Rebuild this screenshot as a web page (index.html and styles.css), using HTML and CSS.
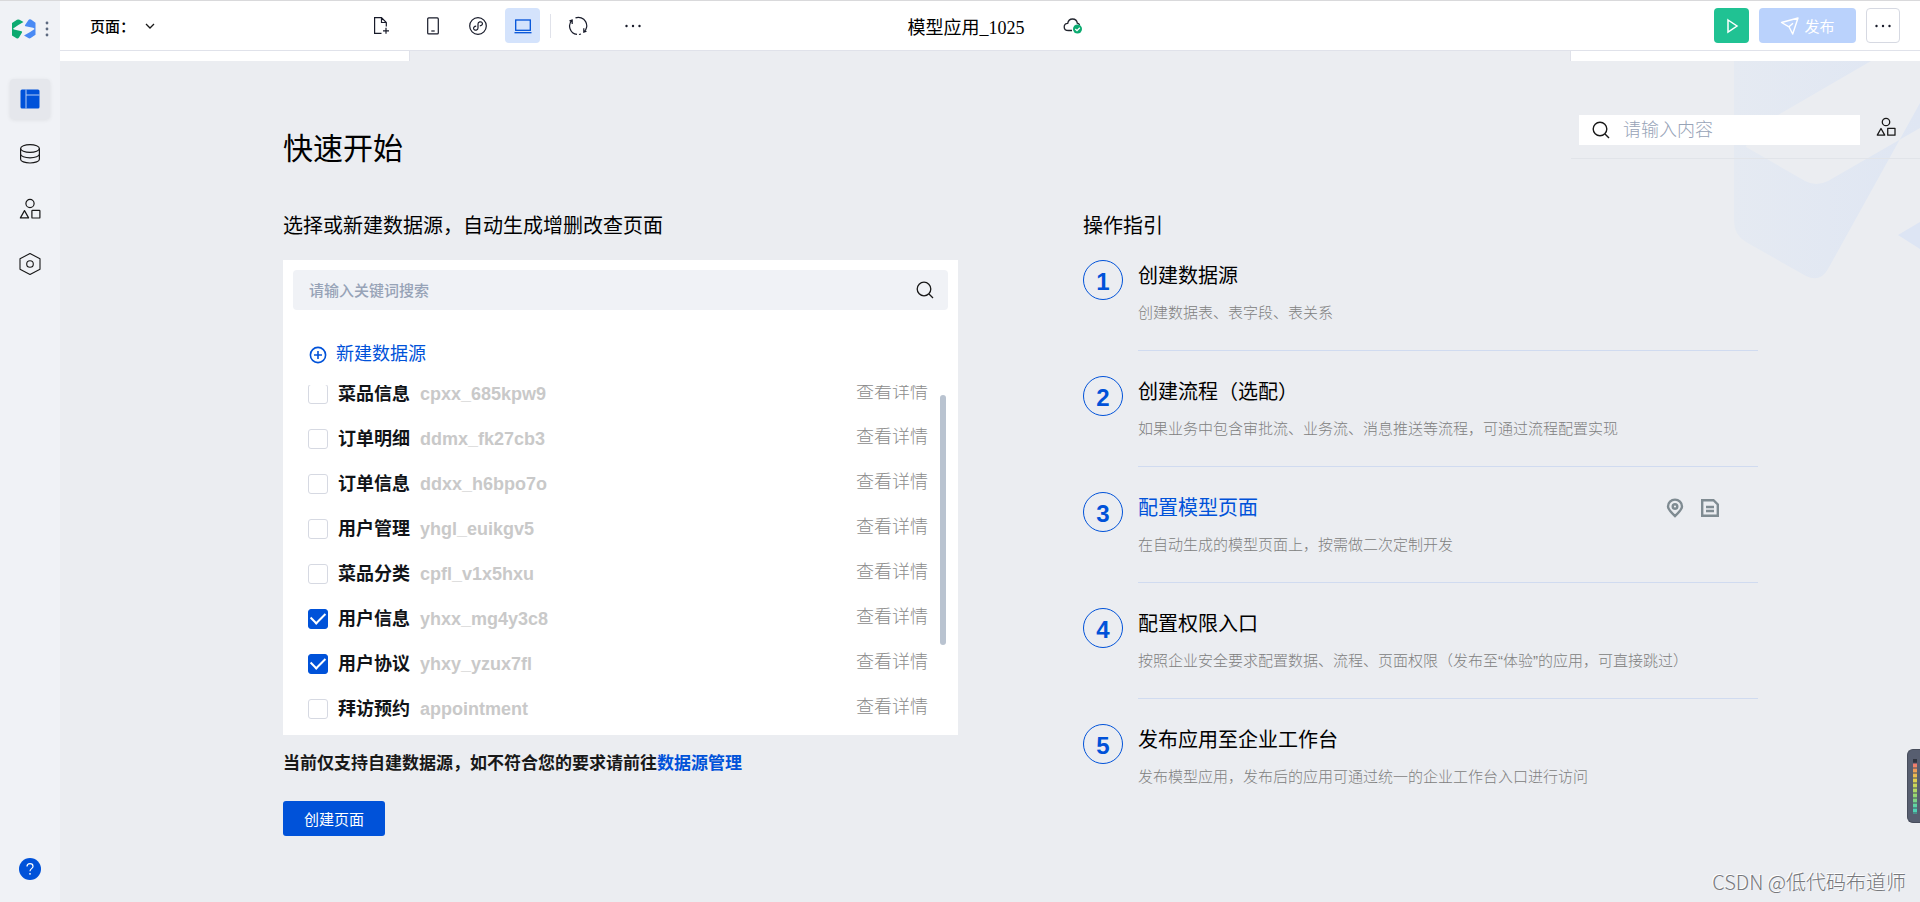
FILE: index.html
```html
<!DOCTYPE html>
<html lang="zh-CN">
<head>
<meta charset="utf-8">
<title>模型应用_1025</title>
<link rel="stylesheet" href="styles.css">
</head>
<body>
<div class="app">
  <aside class="sidebar">
    <div class="brand">
      <svg class="logo" width="24" height="20" viewBox="0 0 24 20">
        <path fill="#0caa70" d="M0 4 5 .8Q6.200 0 7.500 .8L11.500 3Q5 6.500 1.200 9.500Q.8 10.200 2 10.500L9.500 12.300Q10.500 12.600 10 13.500L7 18.500Q6 20 4.500 19.200L0 16.500Z"/>
        <path fill="#4a8af4" d="M23.500 15.800 18.700 19Q17.500 19.800 16.300 19L12 16.500Q18.500 13 22.300 10.200Q22.800 9.300 21 8.800L13.500 7.200Q12.600 7 13.100 6.100L16.500 1Q17.500 -.4 19 .5L23.500 3.800Z"/>
      </svg>
      <button class="plain" aria-label="菜单">
        <svg width="4" height="18" viewBox="0 0 4 18" fill="#5d6a80"><circle cx="2" cy="3" r="1.400"/><circle cx="2" cy="9" r="1.400"/><circle cx="2" cy="15" r="1.400"/></svg>
      </button>
    </div>
    <nav class="side-nav">
      <button class="side-btn side-btn-active" aria-label="页面">
        <svg width="20" height="20" viewBox="0 0 20 20"><rect x=".5" y=".5" width="19" height="19" rx="1.500" fill="#0052d9"/><path d="M6 .5V19.500M6 6H19.500" stroke="#b5cdf5" fill="none"/></svg>
      </button>
      <button class="side-btn" aria-label="数据源">
        <svg width="22" height="22" viewBox="0 0 22 22" fill="none" stroke="#181818" stroke-width="1.200"><ellipse cx="11" cy="5.500" rx="9.400" ry="3.900"/><path d="M1.600 5.500V16.200C1.600 18.400 5.800 20 11 20S20.400 18.400 20.400 16.200V5.500M1.600 11C1.600 13.200 5.800 14.800 11 14.800S20.400 13.200 20.400 11"/></svg>
      </button>
      <button class="side-btn" aria-label="组件">
        <svg width="22" height="22" viewBox="0 0 22 22" fill="none" stroke="#181818" stroke-width="1.200" stroke-linejoin="round"><circle cx="11" cy="5.500" r="4.100"/><path d="M5.500 12.600 9.600 19.900H1.400Z"/><rect x="12.900" y="12.400" width="8" height="7.600" rx=".6"/></svg>
      </button>
      <button class="side-btn" aria-label="设置">
        <svg width="22" height="24" viewBox="0 0 22 24" fill="none" stroke="#181818" stroke-width="1.100" stroke-linejoin="round"><path d="M11 1.500 21 6.800V17.200L11 22.500 1 17.200V6.800Z"/><circle cx="11" cy="12" r="3.300"/></svg>
      </button>
    </nav>
    <button class="plain help" aria-label="帮助">
      <svg width="24" height="24" viewBox="0 0 24 24" fill="none"><circle cx="12" cy="12" r="11" fill="#0052d9"/><path d="M9 9.600C9 7.700 10.300 6.700 12 6.700S15 7.700 15 9.400C15 11.600 12 11.700 12 14.200" stroke="#fff" stroke-width="1.200"/><circle cx="12" cy="16.800" r=".9" fill="#fff"/></svg>
    </button>
  </aside>

  <div class="workspace">
    <header class="topbar">
      <div class="tools">
        <button class="plain page-picker">页面：
          <svg width="12" height="8" viewBox="0 0 12 8" fill="none" stroke="#181818" stroke-width="1.300"><path d="M2 2 6 6 10 2"/></svg>
        </button>
        <button class="tool tool-new" aria-label="新建页面">
          <svg width="20" height="20" viewBox="0 0 20 20" fill="none" stroke="#181b2a" stroke-width="1.200"><path d="M9.500 17.300H2.600V1.700H9.500L14.300 6.500V10.500M9.500 1.700V6.500H14.300M11 14.800H17M14 11.800V17.800"/></svg>
        </button>
        <button class="tool" aria-label="手机">
          <svg width="20" height="20" viewBox="0 0 20 20" fill="none" stroke="#181b2a" stroke-width="1.200"><rect x="4.700" y="1.900" width="10.600" height="16" rx="1"/><path d="M8.300 15H11.700"/></svg>
        </button>
        <button class="tool" aria-label="小程序">
          <svg width="20" height="20" viewBox="0 0 20 20" fill="none" stroke="#181b2a" stroke-width="1.200"><circle cx="10" cy="10" r="8.300"/><path d="M11.800 9.800C14 9.600 14.600 8.300 14.400 7.300 14.100 6.100 12.800 5.600 11.700 5.900 10.600 6.200 10 7 10 8V12C10 13 9.400 13.800 8.300 14.100 7.200 14.400 5.900 13.900 5.600 12.700 5.400 11.700 6 10.400 8.200 10.200"/></svg>
        </button>
        <button class="tool tool-active" aria-label="电脑">
          <svg width="20" height="20" viewBox="0 0 20 20" fill="none" stroke="#0052d9" stroke-width="1.300"><rect x="2.700" y="4" width="14.600" height="10.300"/><path d="M1.500 16.700H18.500"/></svg>
        </button>
        <span class="separator"></span>
        <button class="tool" aria-label="刷新">
          <svg width="20" height="20" viewBox="0 0 20 20" fill="none" stroke="#181b2a" stroke-width="1.200"><path d="M9 18.400A8.400 8.400 0 0 1 4.200 4M4.200 8V4L1.500 4.800M7.500 1.900A8.400 8.400 0 0 1 15.800 16.200M15.800 12.200V16.200L18.500 15.200M11 18.500 13 18"/></svg>
        </button>
        <button class="tool tool-more" aria-label="更多">
          <svg width="20" height="20" viewBox="0 0 20 20" fill="#181b2a"><circle cx="3.500" cy="10" r="1.200"/><circle cx="10" cy="10" r="1.200"/><circle cx="16.500" cy="10" r="1.200"/></svg>
        </button>
      </div>
      <div class="app-name">模型应用_1025
        <svg width="20" height="18" viewBox="0 0 20 18" fill="none"><path d="M5.500 13.500C3 13.500 1.200 12 1.200 9.900 1.200 8 2.700 6.500 4.700 6.400 5.200 3.600 7 2 9.500 2 12.200 2 14 3.800 14.300 6.200 15.500 6.500 16.300 7.200 16.600 8M5.500 13.500H9" stroke="#22252e" stroke-width="1.300"/><circle cx="14.500" cy="12" r="4.500" fill="#0cab70"/><path d="M12.300 12 14 13.600 16.800 10.700" stroke="#fff" stroke-width="1.300"/></svg>
      </div>
      <div class="actions">
        <button class="run" aria-label="预览">
          <svg width="16" height="16" viewBox="0 0 16 16" fill="none" stroke="#fff" stroke-width="1.500"><path d="M4 2 13 8 4 14Z"/></svg>
        </button>
        <button class="publish">
          <svg width="20" height="20" viewBox="0 0 20 20" fill="none" stroke="#fff" stroke-width="1.400" stroke-linejoin="round"><path d="M1.500 6.500 18 2 12.700 18 9 10.800ZM9 10.800 13 7.300"/></svg>
          发布
        </button>
        <button class="more" aria-label="更多操作">
          <svg width="20" height="20" viewBox="0 0 20 20" fill="#181b2a"><circle cx="3.500" cy="10" r="1.200"/><circle cx="10" cy="10" r="1.200"/><circle cx="16.500" cy="10" r="1.200"/></svg>
        </button>
      </div>
    </header>

    <main class="canvas">
      <svg class="backdrop" width="190" height="220" viewBox="0 0 190 220">
        <defs><linearGradient id="fade" x1="0" x2="1" y1="0" y2="0"><stop offset="0" stop-color="#e5eaf2"/><stop offset="1" stop-color="#dfe6f3"/></linearGradient></defs>
        <path fill="url(#fade)" d="M4 0H141L48 54Q18 72 16 86L75 120Q86 126 98 120L190 67V42L98 208Q90 222 76 215L16 181Q4 174 4 160Z"/>
        <path fill="#dde5f4" d="M168 174 190 161V188Z"/>
      </svg>
      <div class="strips"><span class="strip strip-left"></span><span class="strip strip-right"></span></div>

      <div class="headline">
        <h1>快速开始</h1>
        <div class="finder">
          <label class="finder-box">
            <svg width="20" height="20" viewBox="0 0 20 20" fill="none" stroke="#181818" stroke-width="1.400"><circle cx="9" cy="9" r="6.800"/><path d="M14 14 18 18"/></svg>
            <input type="text" placeholder="请输入内容" aria-label="请输入内容">
          </label>
          <button class="plain finder-parts" aria-label="组件库">
            <svg width="20" height="20" viewBox="0 0 22 22" fill="none" stroke="#181818" stroke-width="1.400" stroke-linejoin="round"><circle cx="11" cy="5.500" r="4.100"/><path d="M5.500 12.600 9.600 19.900H1.400Z"/><rect x="12.900" y="12.400" width="8" height="7.600"/></svg>
          </button>
        </div>
      </div>

      <div class="columns">
        <section>
          <h2>选择或新建数据源，自动生成增删改查页面</h2>
          <div class="source-panel">
            <label class="source-search">
              <input type="text" placeholder="请输入关键词搜索" aria-label="请输入关键词搜索">
              <svg width="20" height="20" viewBox="0 0 20 20" fill="none" stroke="#181818" stroke-width="1.300"><circle cx="9" cy="9" r="6.800"/><path d="M14 14 18 18"/></svg>
            </label>
            <button class="plain new-source">
              <svg width="20" height="20" viewBox="0 0 20 20" fill="none" stroke="#0052d9" stroke-width="1.600"><circle cx="10" cy="10" r="7.600"/><path d="M10 6V14M6 10H14"/></svg>
              新建数据源
            </button>
            <div class="source-view">
              <ul class="source-list">
                <li><label><input type="checkbox"><b>菜品信息</b><span>cpxx_685kpw9</span></label><a href="#">查看详情</a></li>
                <li><label><input type="checkbox"><b>订单明细</b><span>ddmx_fk27cb3</span></label><a href="#">查看详情</a></li>
                <li><label><input type="checkbox"><b>订单信息</b><span>ddxx_h6bpo7o</span></label><a href="#">查看详情</a></li>
                <li><label><input type="checkbox"><b>用户管理</b><span>yhgl_euikgv5</span></label><a href="#">查看详情</a></li>
                <li><label><input type="checkbox"><b>菜品分类</b><span>cpfl_v1x5hxu</span></label><a href="#">查看详情</a></li>
                <li><label><input type="checkbox" checked><b>用户信息</b><span>yhxx_mg4y3c8</span></label><a href="#">查看详情</a></li>
                <li><label><input type="checkbox" checked><b>用户协议</b><span>yhxy_yzux7fl</span></label><a href="#">查看详情</a></li>
                <li><label><input type="checkbox"><b>拜访预约</b><span>appointment</span></label><a href="#">查看详情</a></li>
              </ul>
              <div class="scroll-thumb"></div>
            </div>
          </div>
          <p class="note">当前仅支持自建数据源，如不符合您的要求请前往<a href="#">数据源管理</a></p>
          <button class="create">创建页面</button>
        </section>

        <section>
          <h2>操作指引</h2>
          <ol class="steps">
            <li><span class="num">1</span><div class="step"><h3>创建数据源</h3><p>创建数据表、表字段、表关系</p></div></li>
            <li><span class="num">2</span><div class="step"><h3>创建流程（选配）</h3><p>如果业务中包含审批流、业务流、消息推送等流程，可通过流程配置实现</p></div></li>
            <li><span class="num">3</span><div class="step step-current"><h3>配置模型页面</h3><p>在自动生成的模型页面上，按需做二次定制开发</p>
              <div class="step-links">
                <button class="plain" aria-label="定位"><svg width="20" height="20" viewBox="0 0 20 20" fill="none" stroke="#7f8b92" stroke-width="2.400"><path d="M10 18C5.300 13.700 3 11.300 3 8.400A7 6.800 0 0 1 17 8.400C17 11.300 14.700 13.700 10 18Z"/><circle cx="10" cy="8.500" r="2.300"/></svg></button>
                <button class="plain" aria-label="文档"><svg width="20" height="20" viewBox="0 0 20 20" fill="none" stroke="#7f8b92" stroke-width="2.400"><path d="M2.200 2.200H13.500L17.800 6.500V17.800H2.200ZM6 9H14M6 13H14"/></svg></button>
              </div></div></li>
            <li><span class="num">4</span><div class="step"><h3>配置权限入口</h3><p>按照企业安全要求配置数据、流程、页面权限（发布至“体验”的应用，可直接跳过）</p></div></li>
            <li><span class="num">5</span><div class="step"><h3>发布应用至企业工作台</h3><p>发布模型应用，发布后的应用可通过统一的企业工作台入口进行访问</p></div></li>
          </ol>
        </section>
      </div>

      <div class="meter"><span></span></div>
      <div class="watermark">CSDN @低代码布道师</div>
    </main>
  </div>
</div>
</body>
</html>
```

FILE: styles.css
```css
* { box-sizing: border-box; }

body {
  margin: 0;
  font-family: "Liberation Sans", "Noto Sans CJK SC", sans-serif;
  font-size: 15px;
  color: #000;
}

h1, h2, h3, p, ul, ol { margin: 0; padding: 0; }
ul, ol { list-style: none; }
a { color: inherit; text-decoration: none; }
svg { display: block; flex: none; }

button, input { font: inherit; color: inherit; }
button {
  display: flex;
  align-items: center;
  justify-content: center;
  padding: 0;
  border: 0;
  cursor: pointer;
}
.plain { background: none; }

.app {
  display: flex;
  min-height: 100vh;
  border-top: 1px solid #d9d9db;
}

/* Sidebar */
.sidebar {
  display: flex;
  flex-direction: column;
  align-items: center;
  width: 60px;
  flex: none;
  padding: 17px 0 24px;
  background: #f0f2f6;
}
.brand {
  display: flex;
  align-items: center;
  gap: 9px;
  height: 22px;
  padding-left: 1px;
}
.side-nav {
  display: grid;
  gap: 15px;
  margin-top: 39px;
}
.side-btn {
  width: 40px;
  height: 40px;
  border-radius: 4px;
  background: none;
}
.side-btn-active {
  background: #e5e7ec;
  box-shadow: 0 1px 4px rgba(0, 0, 0, 0.08);
}
.help { margin-top: auto; }

.workspace {
  display: flex;
  flex-direction: column;
  flex: 1;
  min-width: 0;
}

/* Top bar */
.topbar {
  display: grid;
  grid-template-columns: 1fr auto 1fr;
  align-items: center;
  height: 50px;
  padding: 0 20px 0 30px;
  border-bottom: 1px solid #e0e2ea;
  background: #fff;
}
.tools {
  display: flex;
  align-items: center;
  gap: 10px;
}
.page-picker {
  justify-content: flex-start;
  gap: 9px;
  width: 264px;
  font-weight: 500;
}
.tool {
  width: 35px;
  height: 35px;
  border-radius: 4px;
  background: none;
}
.tool-new { margin-right: 6px; }
.tool-more { margin-left: 10px; }
.tool-active { background: #d4e3fc; }
.separator {
  width: 1px;
  height: 24px;
  margin-right: -1px;
  background: #e0e2ea;
}
.app-name {
  display: flex;
  align-items: center;
  gap: 38px;
  font-family: "Liberation Serif", "Noto Sans CJK SC", serif;
  font-size: 18px;
}
.actions {
  display: flex;
  justify-content: flex-end;
  gap: 10px;
}
.run, .publish, .more {
  height: 35px;
  border-radius: 4px;
}
.run { width: 35px; background: #20c293; }
.publish {
  width: 97px;
  gap: 4px;
  background: #bad2fc;
  color: #fff;
}
.more {
  width: 34px;
  border: 1px solid #d6d9e2;
  background: #fff;
}

/* Canvas */
.canvas {
  position: relative;
  flex: 1;
  background: #ebedf1;
}
.backdrop {
  position: absolute;
  top: 10px;
  right: 0;
}
.strips {
  display: flex;
  justify-content: space-between;
  height: 10px;
}
.strip { width: 350px; background: #fff; }
.strip-left { border-right: 1px solid #e0e2ea; }
.strip-right { border-left: 1px solid #e0e2ea; }

.headline {
  position: relative;
  display: flex;
  justify-content: space-between;
  align-items: flex-start;
  padding-left: 223px;
}
h1 {
  padding-top: 66px;
  font-size: 30px;
  line-height: 44px;
  font-weight: 400;
}
.finder {
  display: flex;
  align-items: flex-start;
  gap: 16px;
  width: 349px;
  padding: 54px 24px 13px 8px;
  border-bottom: 1px solid #e1e4e9;
}
.finder-box {
  display: flex;
  align-items: center;
  flex: 1;
  gap: 12px;
  height: 30px;
  padding-left: 12px;
  background: #fff;
}
.finder-parts { padding-top: 2px; }
.finder-box input, .source-search input {
  flex: 1;
  width: 100%;
  min-width: 0;
  padding: 0;
  border: 0;
  outline: 0;
  background: none;
}
.finder-box input { font-size: 18px; font-weight: 300; }
.source-search input { font-weight: 500; }
::placeholder { color: #97a3b7; opacity: 1; }

.columns {
  display: grid;
  grid-template-columns: 1fr 1fr;
  gap: 125px;
  padding: 41px 162px 65px 223px;
}
h2 {
  margin-bottom: 19px;
  font-size: 20px;
  line-height: 29px;
  font-weight: 400;
}

/* Data sources */
.source-panel {
  padding: 10px 10px 0;
  background: #fff;
}
.source-search {
  display: flex;
  align-items: center;
  height: 40px;
  padding: 0 13px 0 16px;
  border-radius: 4px;
  background: #f0f2f6;
}
.new-source {
  gap: 8px;
  margin: 31px 0 17px 15px;
  font-size: 18px;
  line-height: 27px;
  color: #0052d9;
}
.source-view {
  position: relative;
  height: 350px;
  overflow: hidden;
}
.source-list {
  margin-top: -14px;
  padding: 0 20px 0 15px;
}
.source-list li {
  display: flex;
  align-items: center;
  justify-content: space-between;
  height: 45px;
  font-size: 18px;
  line-height: 20px;
}
.source-list label {
  display: flex;
  align-items: center;
  gap: 10px;
}
.source-list b { color: #111418; }
.source-list span { font-weight: 700; color: #c9c9c9; }
.source-list a {
  padding-bottom: 4px;
  font-weight: 300;
  color: #8c8c8c;
}
.source-list input {
  display: grid;
  place-items: center;
  appearance: none;
  width: 20px;
  height: 20px;
  margin: 0;
  border: 1px solid #d6d9e2;
  border-radius: 3px;
  background: #fff;
}
.source-list input:checked {
  border-color: #0052d9;
  background: #0052d9;
}
.source-list input:checked::after {
  content: "";
  width: 12px;
  height: 7px;
  margin-bottom: 4px;
  border: solid #fff;
  border-width: 0 0 2px 2px;
  rotate: -45deg;
}
.scroll-thumb {
  position: absolute;
  top: 10px;
  right: 2px;
  width: 6px;
  height: 250px;
  border-radius: 3px;
  background: #b9c3d0;
}

.note {
  margin: 15px 0 23px;
  font-size: 17px;
  line-height: 28px;
  font-weight: 700;
  color: #181818;
}
.note a { color: #0052d9; }
.create {
  width: 102px;
  height: 35px;
  border-radius: 3px;
  background: #0052d9;
  color: #fff;
}

/* Guide */
.steps li {
  display: flex;
  gap: 15px;
}
.num {
  flex: none;
  width: 40px;
  height: 40px;
  border: 1px solid #0052d9;
  border-radius: 50%;
  font-size: 24px;
  line-height: 41px;
  font-weight: 700;
  text-align: center;
  color: #0052d9;
}
.step {
  display: grid;
  grid-template-columns: 1fr auto;
  align-items: center;
  flex: 1;
  margin-bottom: 25px;
  padding-bottom: 26px;
  border-bottom: 1px solid #d0dbf0;
}
.steps li:last-child .step { border-bottom-color: transparent; }
h3 {
  font-size: 20px;
  line-height: 32px;
  font-weight: 400;
}
.step p {
  grid-column: 1 / -1;
  margin-top: 10px;
  line-height: 22px;
  font-weight: 300;
  color: #808080;
}
.step-current h3 { color: #0052d9; }
.step-links {
  display: flex;
  grid-area: 1 / 2;
  gap: 15px;
  padding-right: 38px;
}

/* Volume meter docked on the window edge */
.meter {
  position: absolute;
  right: 0;
  top: 698px;
  width: 13px;
  height: 74px;
  padding: 9px 3px 8px 5px;
  border: 1px solid #474d5c;
  border-right: 0;
  border-radius: 6px 0 0 6px;
  background: #575e70;
}
.meter span {
  display: block;
  height: 100%;
  background:
    repeating-linear-gradient(transparent 0 3px, rgba(70, 78, 95, 0.5) 3px 5px),
    linear-gradient(#30343f 0 7%, #f07575 8%, #ef9a58 20%, #e8d04c 36%, #b9dc62 55%, #86d77c 72%, #4fd3b5 90%);
}
.watermark {
  position: absolute;
  right: 14px;
  bottom: 8px;
  font-family: "Noto Sans CJK SC", sans-serif;
  font-size: 20px;
  line-height: 30px;
  font-weight: 300;
  color: #77787c;
  text-shadow: -1px -1px 0 #fff;
}
```
